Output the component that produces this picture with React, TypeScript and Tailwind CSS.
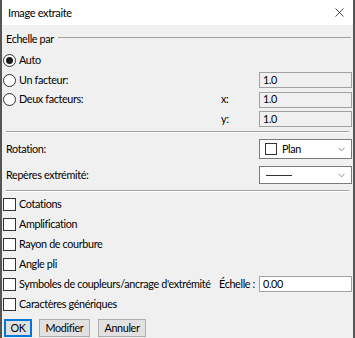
import { ChevronDown, X } from 'lucide-react';

function Radio({ checked }: { checked?: boolean }) {
  return (
    <span className="w-[13px] h-[13px] rounded-full border border-[#333] bg-white flex items-center justify-center shrink-0">
      {checked && <span className="w-[7px] h-[7px] rounded-full bg-[#1a1a1a]" />}
    </span>
  );
}

function Check() {
  return <span className="w-[13px] h-[13px] border border-[#333] bg-white shrink-0" />;
}

function Field({ value, white }: { value: string; white?: boolean }) {
  return (
    <div
      className={`w-[93px] h-[16px] border border-[#a0a0a0] pl-[3px] flex items-center shrink-0 ${
        white ? 'bg-white' : 'bg-[#f0f0f0]'
      }`}
    >
      {value}
    </div>
  );
}

const checks = ['Cotations', 'Amplification', 'Rayon de courbure', 'Angle pli'];

export default function App() {
  return (
    <div
      className="w-[355px] h-[338px] bg-[#f0f0f0] text-[10.8px] tracking-[-0.35px] leading-none text-black border-l-2 border-r-2 border-[#555] flex flex-col whitespace-nowrap"
      style={{ fontFamily: 'Lato, "Liberation Sans", sans-serif' }}
    >
      {/* Title bar */}
      <div className="h-[25px] bg-white flex items-center justify-between pl-[6px] pr-[6px] shrink-0">
        <span className="text-[11px]">Image extraite</span>
        <X className="w-[15px] h-[15px] text-[#222]" strokeWidth={1.3} />
      </div>

      {/* Echelle par */}
      <div className="h-[22px] mt-[3px] flex items-center pl-[4px] pr-[2px] gap-[4px]">
        <span>Echelle par</span>
        <div className="flex-1 h-px bg-[#a0a0a0] -mt-[3px]" />
      </div>
      <div className="h-[20px] flex items-center gap-[3px] pl-[1px]">
        <Radio checked />
        <span>Auto</span>
      </div>
      <div className="h-[20px] flex items-center pl-[1px] pr-[1px]">
        <Radio />
        <span className="ml-[3px] flex-1">Un facteur:</span>
        <Field value="1.0" />
      </div>
      <div className="h-[19px] flex items-center pl-[1px] pr-[1px]">
        <Radio />
        <span className="ml-[3px] flex-1">Deux facteurs:</span>
        <span className="w-[38px]">x:</span>
        <Field value="1.0" />
      </div>
      <div className="h-[20px] flex items-center justify-end pr-[1px]">
        <span className="w-[38px]">y:</span>
        <Field value="1.0" />
      </div>
      <div className="h-[2px] mt-[2px] mx-[4px] border-t border-[#a0a0a0] border-b border-b-white" />

      {/* Rotation / Repères */}
      <div className="h-[20px] mt-[6px] flex items-center justify-between pl-[4px] pr-[1px]">
        <span>Rotation:</span>
        <div className="w-[93px] h-[20px] bg-white border border-[#7a7a7a] flex items-center pl-[5px] pr-[4px]">
          <span className="w-[12px] h-[12px] border border-[#333] shrink-0" />
          <span className="ml-[5px] flex-1">Plan</span>
          <ChevronDown className="w-[11px] h-[11px] text-[#555]" strokeWidth={1.5} />
        </div>
      </div>
      <div className="h-[18px] mt-[7px] flex items-center justify-between pl-[4px] pr-[1px]">
        <span>Repères extrémité:</span>
        <div className="w-[93px] h-[18px] bg-white border border-[#7a7a7a] flex items-center pl-[6px] pr-[4px]">
          <span className="w-[26px] h-px bg-[#333]" />
          <span className="flex-1" />
          <ChevronDown className="w-[11px] h-[11px] text-[#555]" strokeWidth={1.5} />
        </div>
      </div>
      <div className="h-[2px] mt-[6px] mx-[4px] border-t border-[#a0a0a0] border-b border-b-white" />

      {/* Checkboxes */}
      <div className="flex flex-col mt-[2px]">
        {checks.map((c) => (
          <div key={c} className="h-[20px] flex items-center gap-[3px] pl-[1px]">
            <Check />
            <span>{c}</span>
          </div>
        ))}
        <div className="h-[20px] flex items-center pl-[1px] pr-[1px]">
          <Check />
          <span className="ml-[3px] flex-1">Symboles de coupleurs/ancrage d'extrémité</span>
          <span className="w-[40px]">Échelle :</span>
          <Field value="0.00" white />
        </div>
        <div className="h-[20px] flex items-center gap-[3px] pl-[1px]">
          <Check />
          <span>Caractères génériques</span>
        </div>
      </div>

      {/* Buttons */}
      <div className="flex items-center mt-[5px] pl-[2px] gap-[6px]">
        <button className="w-[28px] h-[18px] bg-[#e1e1e1] border-2 border-[#0078d7] flex items-center justify-center">
          OK
        </button>
        <button className="w-[51px] h-[18px] bg-[#e1e1e1] border border-[#adadad] flex items-center justify-center ml-[1px]">
          Modifier
        </button>
        <button className="w-[48px] h-[18px] bg-[#e1e1e1] border border-[#adadad] flex items-center justify-center ml-[2px]">
          Annuler
        </button>
      </div>
    </div>
  );
}
